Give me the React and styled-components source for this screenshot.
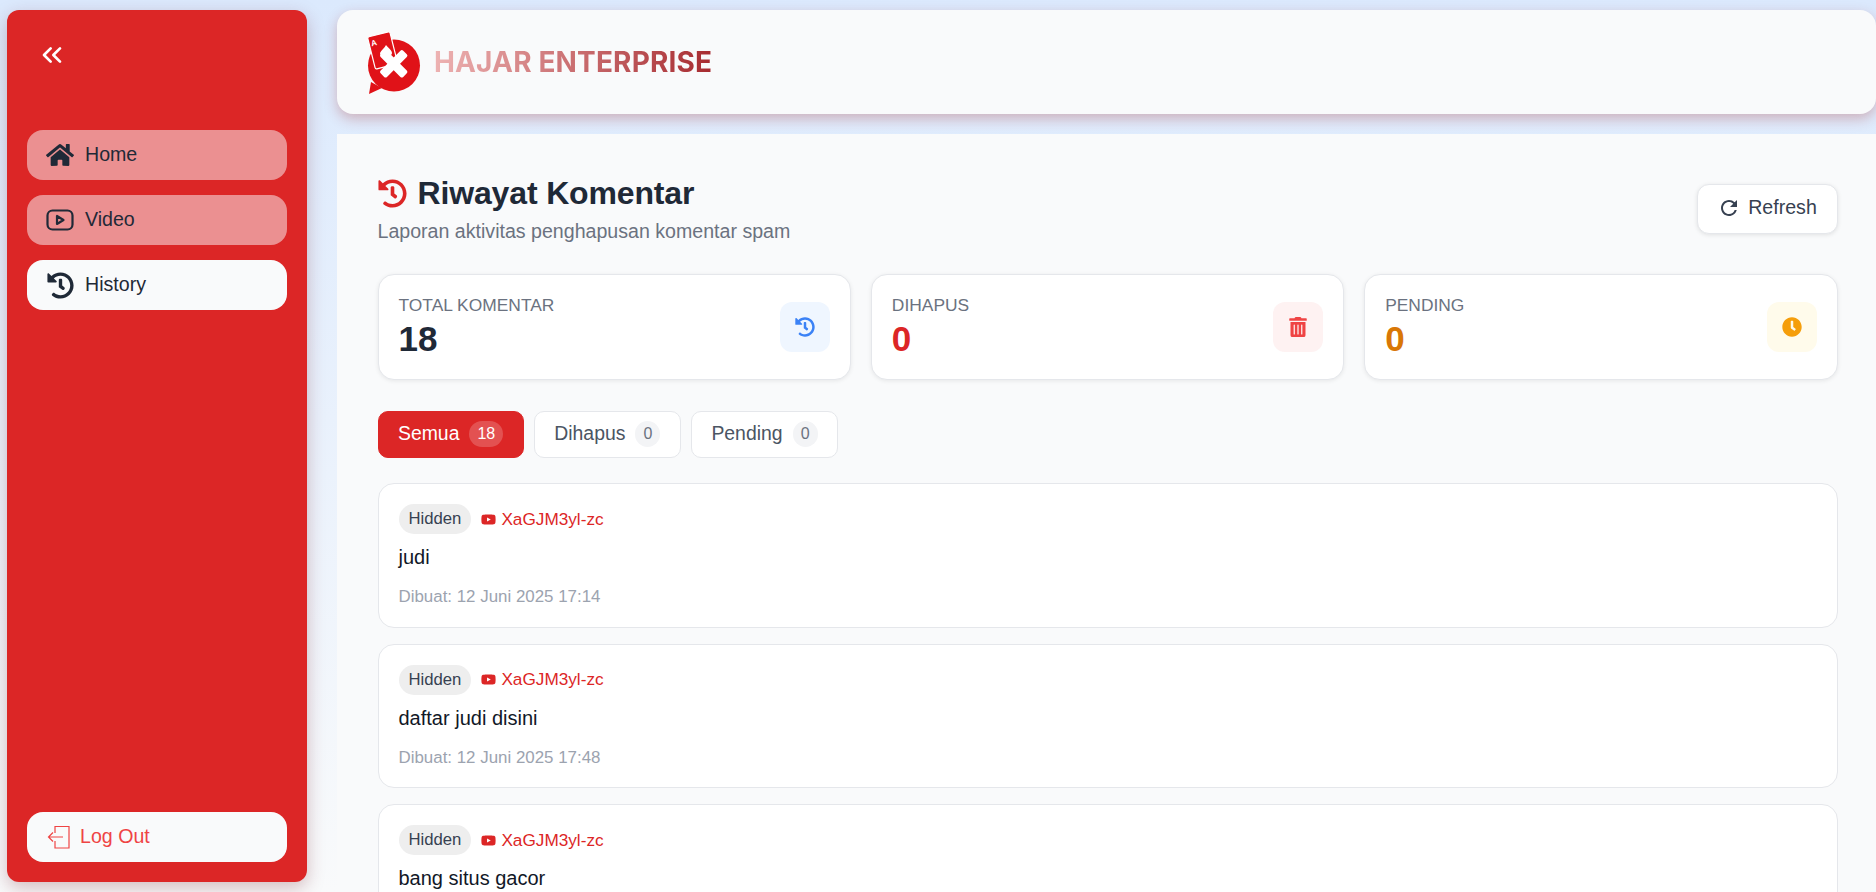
import React from "react";
import styled, { createGlobalStyle } from "styled-components";
import { FaHome, FaHistory, FaTrashAlt, FaClock, FaYoutube } from "react-icons/fa";
import { MdRefresh } from "react-icons/md";
import { LuChevronsLeft } from "react-icons/lu";

const Global = createGlobalStyle`
  html, body { margin: 0; height: 100%; overflow: hidden; }
  body {
    font-family: "Liberation Sans", Arial, sans-serif;
    background: linear-gradient(180deg, #dbe9fd 0%, #f9fafb 100%);
  }
  * { box-sizing: border-box; }
`;

const Shell = styled.div`
  display: flex;
  height: 892px;
  padding-left: 7px;
`;
const Sidebar = styled.aside`
  width: 300px;
  flex: none;
  margin: 10px 0;
  padding: 0 20px 20px;
  background: #dc2626;
  border-radius: 12px;
  box-shadow: 0 6px 18px rgba(120, 30, 40, 0.28);
  display: flex;
  flex-direction: column;
`;
const Collapse = styled.button`
  align-self: flex-start;
  margin: 29px 0 0 9px;
  padding: 0;
  border: 0;
  background: none;
  color: #fff;
  display: flex;
  height: 32px;
  align-items: center;
`;
const Nav = styled.nav`
  margin-top: 59px;
  display: flex;
  flex-direction: column;
  gap: 15px;
  flex: 1;
`;
const NavItem = styled.a`
  height: 50px;
  padding: 0 19px;
  border-radius: 16px;
  display: flex;
  align-items: center;
  gap: 11px;
  font-size: 19.6px;
  color: #1f2937;
  background: ${(p) => (p.$active ? "#f9fafb" : "rgba(249, 250, 251, 0.5)")};
`;
const NavLabel = styled.span`
  padding-bottom: 2px;
`;
const IconSlot = styled.span`
  width: 28px;
  height: 28px;
  flex: none;
  display: flex;
  align-items: center;
  justify-content: center;
`;
const LogOut = styled.a`
  height: 50px;
  padding: 0 19px 0 20px;
  border-radius: 16px;
  display: flex;
  align-items: center;
  gap: 9px;
  font-size: 19.6px;
  color: #ef4444;
  background: #f9fafb;
`;
const Column = styled.div`
  flex: 1;
  min-width: 0;
  margin-left: 30px;
  padding-top: 10px;
  display: flex;
  flex-direction: column;
  gap: 20px;
`;
const Header = styled.header`
  height: 104px;
  flex: none;
  padding-left: 23px;
  background: #f9fafb;
  border-radius: 16px;
  box-shadow: 0 5px 13px rgba(165, 45, 45, 0.3);
  display: flex;
  align-items: center;
  gap: 4px;
`;
const Brand = styled.h1`
  margin: 0;
  font-family: Inter, "Liberation Sans", sans-serif;
  font-size: 28px;
  font-weight: 700;
  letter-spacing: 0.15px;
  background: linear-gradient(100deg, #eeb4b4 0%, #a62a2f 100%);
  -webkit-background-clip: text;
  background-clip: text;
  color: transparent;
`;
const Main = styled.main`
  flex: 1;
  min-height: 0;
  overflow: hidden;
  background: #f9fafb;
  padding: 38px 38.5px 0 40.5px;
`;
const TitleRow = styled.div`
  display: flex;
  justify-content: space-between;
  align-items: center;
`;
const Title = styled.h2`
  margin: 0;
  display: flex;
  align-items: center;
  gap: 11px;
  font-size: 32px;
  letter-spacing: -0.15px;
  line-height: 42px;
  font-weight: 700;
  color: #1f2937;
  svg { color: #dc2626; }
`;
const Subtitle = styled.p`
  margin: 5px 0 0;
  font-size: 19.6px;
  line-height: 24px;
  color: #6b7280;
`;
const RefreshButton = styled.button`
  width: 141px;
  height: 50px;
  margin-top: 2px;
  padding: 0 0 2px;
  border: 1px solid #e5e7eb;
  border-radius: 12px;
  background: #fff;
  box-shadow: 0 1px 4px rgba(0, 0, 0, 0.1);
  color: #374151;
  font: 19.6px "Liberation Sans", sans-serif;
  display: flex;
  align-items: center;
  justify-content: center;
  gap: 7px;
`;
const Stats = styled.section`
  margin-top: 31px;
  display: grid;
  grid-template-columns: repeat(3, 1fr);
  gap: 20px;
`;
const StatCard = styled.div`
  height: 106px;
  padding: 0 20px;
  background: #fff;
  border: 1px solid #e5e7eb;
  border-radius: 16px;
  box-shadow: 0 1px 4px rgba(0, 0, 0, 0.08);
  display: flex;
  align-items: center;
  justify-content: space-between;
`;
const StatLabel = styled.div`
  font-size: 17.4px;
  line-height: 20px;
  color: #6b7280;
  text-transform: uppercase;
`;
const StatValue = styled.div`
  margin-top: 4px;
  font-size: 35px;
  line-height: 40px;
  font-weight: 700;
  color: ${(p) => p.$color};
`;
const StatIcon = styled.div`
  width: 50px;
  height: 50px;
  border-radius: 12px;
  background: ${(p) => p.$bg};
  color: ${(p) => p.$color};
  display: flex;
  align-items: center;
  justify-content: center;
`;
const Tabs = styled.div`
  margin-top: 31px;
  display: flex;
  gap: 10px;
`;
const Tab = styled.button`
  height: 47px;
  padding: 0 19.5px 2px;
  border-radius: 10px;
  border: 1px solid ${(p) => (p.$active ? "#dc2626" : "#e5e7eb")};
  background: ${(p) => (p.$active ? "#dc2626" : "#fff")};
  color: ${(p) => (p.$active ? "#fff" : "#4b5563")};
  font: 19.4px "Liberation Sans", sans-serif;
  display: flex;
  align-items: center;
  gap: 10px;
`;
const TabCount = styled.span`
  min-width: 25px;
  height: 26px;
  padding: 0 8px;
  border-radius: 13px;
  background: ${(p) => (p.$active ? "rgba(255,255,255,0.2)" : "#f3f4f6")};
  color: ${(p) => (p.$active ? "#fff" : "#6b7280")};
  font-size: 16px;
  display: flex;
  align-items: center;
  justify-content: center;
`;
const Comments = styled.div`
  margin-top: 25px;
  display: flex;
  flex-direction: column;
  gap: 16px;
`;
const Comment = styled.article`
  flex: none;
  height: 144.5px;
  padding: 20px;
  background: #fff;
  border: 1px solid #e5e7eb;
  border-radius: 16px;
`;
const Meta = styled.div`
  display: flex;
  align-items: center;
  gap: 10px;
`;
const Status = styled.span`
  height: 30px;
  padding: 0 10px;
  border-radius: 15px;
  background: #eeeeee;
  color: #374151;
  font-size: 16.7px;
  display: flex;
  align-items: center;
`;
const VideoLink = styled.a`
  display: flex;
  align-items: center;
  gap: 5px;
  color: #dc2626;
  font-size: 17.2px;
`;
const Body = styled.p`
  margin: 10px 0 0;
  font-size: 20px;
  line-height: 27px;
  color: #111827;
`;
const Created = styled.div`
  margin-top: 16px;
  font-size: 16.9px;
  line-height: 20px;
  color: #9ca3af;
`;

function Logo() {
  return (
    <svg width="70" height="72" viewBox="0 0 70 72" style={{ flex: "none" }} aria-hidden="true">
      <circle cx="34" cy="39.5" r="26" fill="#e01218" />
      <path d="M11 56 L9 68 L22 62 Z" fill="#e01218" />
      <g transform="rotate(-14 22 24)">
        <rect x="11" y="8" width="23" height="33" rx="1.5" fill="#e01218" stroke="#fff" strokeWidth="1.2" />
        <text x="13" y="18" fontSize="8" fontWeight="700" fill="#fff" fontFamily="Liberation Sans, sans-serif">A</text>
      </g>
      <path d="M20 27 C21 24 25 22 26 19 C28 22 32 24 32 27 C32 30 28 30 27 29 L28 32 L24 32 L25 29 C23 30 20 30 20 27 Z" fill="#fff" />
      <g fill="#fff" transform="rotate(45 33.7 37.8)">
        <rect x="17.7" y="33.3" width="32" height="9" rx="2" />
        <rect x="29.2" y="21.8" width="9" height="32" rx="2" />
      </g>
    </svg>
  );
}

function DoorOut() {
  return (
    <svg width="24" height="24" viewBox="0 0 24 24" fill="none" stroke="currentColor" strokeWidth="1.2" aria-hidden="true">
      <path d="M8 8 V1.5 H22 V23 H8 V16" />
      <path d="M16 12 H1.5 M6 7.5 L1.5 12 L6 16.5" />
    </svg>
  );
}

function VideoIcon() {
  return (
    <svg width="28" height="28" viewBox="0 0 28 28" fill="none" stroke="currentColor" strokeWidth="2.2" strokeLinejoin="round" aria-hidden="true">
      <rect x="1.5" y="4.5" width="25" height="19" rx="5" />
      <path d="M11 10 L11 18 L17.5 14 Z" />
    </svg>
  );
}

const comments = [
  { id: 1, text: "judi", date: "12 Juni 2025 17:14" },
  { id: 2, text: "daftar judi disini", date: "12 Juni 2025 17:48" },
  { id: 3, text: "bang situs gacor" },
];

export default function App() {
  return (
    <>
      <Global />
      <Shell>
        <Sidebar>
          <Collapse aria-label="Collapse"><LuChevronsLeft size={32} strokeWidth={2} /></Collapse>
          <Nav>
            <NavItem><IconSlot><FaHome size={28} /></IconSlot><NavLabel>Home</NavLabel></NavItem>
            <NavItem><IconSlot><VideoIcon /></IconSlot><NavLabel>Video</NavLabel></NavItem>
            <NavItem $active><IconSlot><FaHistory size={27} /></IconSlot><NavLabel>History</NavLabel></NavItem>
          </Nav>
          <LogOut><DoorOut /><NavLabel>Log Out</NavLabel></LogOut>
        </Sidebar>
        <Column>
          <Header>
            <Logo />
            <Brand>HAJAR ENTERPRISE</Brand>
          </Header>
          <Main>
            <TitleRow>
              <div>
                <Title><FaHistory size={29} />Riwayat Komentar</Title>
                <Subtitle>Laporan aktivitas penghapusan komentar spam</Subtitle>
              </div>
              <RefreshButton><MdRefresh size={24} />Refresh</RefreshButton>
            </TitleRow>
            <Stats>
              <StatCard>
                <div><StatLabel>Total Komentar</StatLabel><StatValue $color="#1f2937">18</StatValue></div>
                <StatIcon $bg="#eff6ff" $color="#3b82f6"><FaHistory size={20} /></StatIcon>
              </StatCard>
              <StatCard>
                <div><StatLabel>Dihapus</StatLabel><StatValue $color="#dc2626">0</StatValue></div>
                <StatIcon $bg="#fef2f2" $color="#ef4444"><FaTrashAlt size={20} /></StatIcon>
              </StatCard>
              <StatCard>
                <div><StatLabel>Pending</StatLabel><StatValue $color="#d97706">0</StatValue></div>
                <StatIcon $bg="#fffbeb" $color="#f59e0b"><FaClock size={20} /></StatIcon>
              </StatCard>
            </Stats>
            <Tabs>
              <Tab $active>Semua<TabCount $active>18</TabCount></Tab>
              <Tab>Dihapus<TabCount>0</TabCount></Tab>
              <Tab>Pending<TabCount>0</TabCount></Tab>
            </Tabs>
            <Comments>
              {comments.map((c) => (
                <Comment key={c.id}>
                  <Meta>
                    <Status>Hidden</Status>
                    <VideoLink><FaYoutube size={15} />XaGJM3yl-zc</VideoLink>
                  </Meta>
                  <Body>{c.text}</Body>
                  {c.date && <Created>Dibuat: {c.date}</Created>}
                </Comment>
              ))}
            </Comments>
          </Main>
        </Column>
      </Shell>
    </>
  );
}
